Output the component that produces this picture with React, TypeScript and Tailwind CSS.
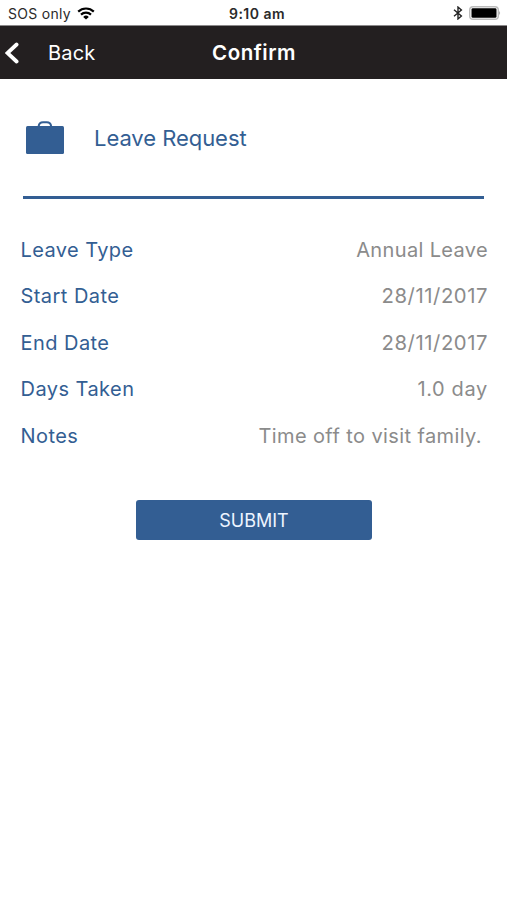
import React from 'react';

const rows: { label: string; value: string; ls: string; vs: string }[] = [
  { label: 'Leave Type', value: 'Annual Leave', ls: 'tracking-[0.4px]', vs: 'tracking-[0.35px]' },
  { label: 'Start Date', value: '28/11/2017', ls: 'tracking-[0.45px]', vs: 'tracking-[0.55px] text-[20.3px]' },
  { label: 'End Date', value: '28/11/2017', ls: 'tracking-[0.45px]', vs: 'tracking-[0.55px] text-[20.3px]' },
  { label: 'Days Taken', value: '1.0 day', ls: 'tracking-[0.45px]', vs: 'tracking-[0.65px]' },
  { label: 'Notes', value: 'Time off to visit family.', ls: 'tracking-[0.45px]', vs: 'tracking-[0.4px] pr-[6px]' },
];

export default function App() {
  return (
    <div className="flex h-[900px] w-[507px] flex-col bg-white font-['Inter','Liberation_Sans',sans-serif]">
      <div className="grid h-[25px] grid-cols-3 items-center pt-[2px] text-[14px] text-[#2a2a2a]">
        <div className="flex items-center gap-[6px] pl-[8px]">
          <span className="tracking-[0.3px]">SOS only</span>
          <svg className="mb-[1px]" width="18" height="13" viewBox="0 0 18 13" fill="none" stroke="#000" strokeWidth="2.2">
            <path d="M1.2 4.6a11.4 11.4 0 0 1 15.6 0" />
            <path d="M4 7.6a7.3 7.3 0 0 1 10 0" />
            <path d="M9 12.6L6.2 9.9a4 4 0 0 1 5.6 0z" fill="#000" stroke="none" />
          </svg>
        </div>
        <div className="pl-[7px] text-center font-semibold tracking-[0.45px]">9:10 am</div>
        <div className="flex items-center justify-end gap-[6px] pr-[6px] pb-[2px]">
          <svg width="10" height="14" viewBox="0 0 10 14" fill="none" stroke="#222" strokeWidth="1.4">
            <path d="M1 3.7l7.4 6.2-3.4 3V1.1l3.4 3L1 10.3" />
          </svg>
          <svg width="32" height="14" viewBox="0 0 32 14">
            <rect x=".7" y=".7" width="28.6" height="12.6" rx="3.4" fill="#fff" stroke="#bcbcbc" strokeWidth="1.4" />
            <rect x="2.5" y="2.3" width="25" height="9.4" rx="1.3" />
            <path d="M30.2 4.8q1.8 2.2 0 4.4z" fill="#999" />
          </svg>
        </div>
      </div>
      <header className="grid h-[54px] grid-cols-3 items-center border-t border-[#8b898a] bg-[#231f20] text-[20px] text-white">
        <div className="flex items-center gap-[28px] pl-[5px]">
          <svg width="15" height="22" viewBox="0 0 15 22" fill="none" stroke="#fff" strokeWidth="3.8" strokeLinecap="round">
            <path d="M11.6 2.5L2.4 11l9.2 8.5" />
          </svg>
          <span className="tracking-[0.2px]">Back</span>
        </div>
        <h1 className="pt-[2px] pl-[1px] text-center text-[20.5px] font-semibold tracking-[0.5px]">Confirm</h1>
      </header>
      <div className="mx-[23px] flex h-[120px] items-center border-b-[3px] border-[#335e93] pl-[3px]">
        <svg width="38" height="33" viewBox="0 0 38 33" fill="#335e93">
          <rect y="5" width="38" height="28" rx="1.5" />
          <path d="M12.6 5.5c.4-3 2-4.2 4.4-4.2h3.8c2.4 0 4 1.2 4.4 4.2" fill="none" stroke="#335e93" strokeWidth="2" />
        </svg>
        <h2 className="pt-[1px] pl-[30px] text-[22px] tracking-[-0.05px] text-[#335e93]">Leave Request</h2>
      </div>
      <dl className="mt-[27.8px] flex flex-col pr-[19px] pl-[20.5px] text-[20px]">
        {rows.map((r) => (
          <div key={r.label} className="flex h-[46.4px] items-center justify-between">
            <dt className={`text-[#335e93] ${r.ls}`}>{r.label}</dt>
            <dd className={`text-[#8b8b8b] ${r.vs}`}>{r.value}</dd>
          </div>
        ))}
      </dl>
      <button className="mt-[41.2px] ml-[136px] h-[40px] w-[236px] rounded-[3px] bg-[#335e93] pt-[1px] text-[18px] text-[#edf4ff]">SUBMIT</button>
    </div>
  );
}
